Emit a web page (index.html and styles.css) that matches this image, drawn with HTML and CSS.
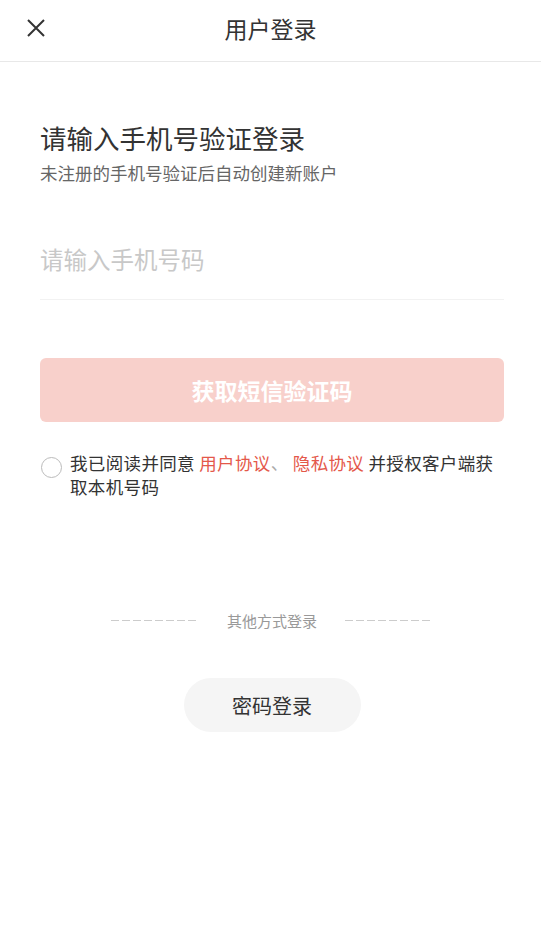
FILE: index.html
```html
<!DOCTYPE html>
<html lang="zh-CN">
<head>
    <meta charset="UTF-8">
    <meta name="viewport" content="width=device-width, initial-scale=1">
    <title>用户登录</title>
    <link rel="stylesheet" href="styles.css">
</head>
<body>
    <div class="header">
        <span class="close">
            <svg width="18" height="18" viewBox="0 0 18 18">
                <path d="M1 1 L17 17 M17 1 L1 17" stroke="#333" stroke-width="2" fill="none"/>
            </svg>
        </span>
        <div class="title">用户登录</div>
    </div>

    <div class="main">
        <h2 class="heading">请输入手机号验证登录</h2>
        <p class="sub">未注册的手机号验证后自动创建新账户</p>

        <div class="input-container">
            <input type="tel" placeholder="请输入手机号码">
        </div>

        <button class="sms-btn">获取短信验证码</button>

        <div class="agree">
            <span class="radio"></span>
            <p>我已阅读并同意 <a href="#">用户协议</a><span class="sep">、</span> <a href="#">隐私协议</a> 并授权客户端获取本机号码</p>
        </div>

        <div class="other">
            <span class="dash"></span>
            <span class="other-text">其他方式登录</span>
            <span class="dash"></span>
        </div>

        <div class="pwd-wrap">
            <button class="pwd-btn">密码登录</button>
        </div>
    </div>
</body>
</html>
```

FILE: styles.css
```css
* {
     box-sizing: border-box;
 }

body {
     margin: 0;
     background: #fff;
     font-family: "Noto Sans CJK SC", "Noto Sans", sans-serif;
     color: #333;
 }

.header {
     height: 62px;
     border-bottom: 1px solid #e8e8e8;
     display: flex;
     align-items: center;
     justify-content: center;
     position: relative;
 }

.close {
     position: absolute;
     left: 27px;
     top: 19px;
     width: 18px;
     height: 18px;
     display: flex;
 }

.title {
     font-size: 23px;
     color: #333;
     margin-top: -5px;
 }

.main {
     padding: 0 37px 0 40px;
 }

.heading {
     margin: 56px 0 0;
     font-size: 26.5px;
     font-weight: normal;
     color: #333;
     line-height: 40px;
 }

.sub {
     margin: 2px 0 0;
     font-size: 17.5px;
     color: #666;
     line-height: 26px;
 }

.input-container {
     margin-top: 52px;
     border-bottom: 1px solid #f2f2f2;
     height: 62px;
 }

.input-container input {
     width: 100%;
     border: none;
     outline: none;
     padding: 0;
     height: 42px;
     font-family: inherit;
     font-size: 23.5px;
     color: #333;
 }

.input-container input::placeholder {
     color: #c8c8c8;
 }

.sms-btn {
     display: block;
     width: 100%;
     height: 64px;
     margin-top: 58px;
     border: none;
     border-radius: 6px;
     background-color: #f8d0cb;
     color: #fff;
     font-family: inherit;
     font-size: 23px;
     font-weight: bold;
 }

.agree {
     margin-top: 29px;
     display: flex;
     align-items: flex-start;
 }

.radio {
     flex: none;
     width: 21px;
     height: 21px;
     border: 1px solid #bbb;
     border-radius: 50%;
     margin: 6px 8px 0 1px;
 }

.agree p {
     margin: 0;
     font-size: 17.5px;
     letter-spacing: 0.35px;
     line-height: 24px;
     color: #333;
 }

.agree a {
     color: #e4584a;
     text-decoration: none;
 }

.agree .sep {
     color: #aaa;
 }

.other {
     margin-top: 111px;
     display: flex;
     align-items: center;
     justify-content: center;
     gap: 28px;
 }

.dash {
     width: 88px;
     height: 1px;
     background: repeating-linear-gradient(to right, #ccc 0, #ccc 8px, transparent 8px, transparent 11px);
 }

.other-text {
     font-size: 15px;
     color: #999;
 }

.pwd-wrap {
     margin-top: 47px;
     display: flex;
     justify-content: center;
 }

.pwd-btn {
     width: 177px;
     height: 54px;
     border: none;
     border-radius: 27px;
     background-color: #f5f5f5;
     color: #333;
     font-family: inherit;
     font-size: 20px;
 }
```
